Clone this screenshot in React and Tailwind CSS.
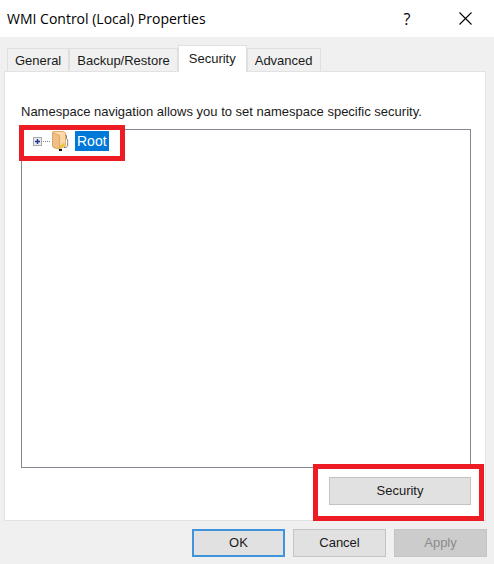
import React, { useState } from "react";

const tabs = ["General", "Backup/Restore", "Security", "Advanced"];

const FolderIcon = () => (
  <svg width="20" height="22" viewBox="0 0 20 22" aria-hidden="true">
    <path d="M3 1.5h11l1.5 1.5v13l-4 2H4l-1.5-2z" fill="#fbdcae" stroke="#dfae72" />
    <path d="M2.5 2.5l7 3v14l-5-2-2-2z" fill="#f0bf86" stroke="#d9a05c" strokeWidth="0.8" />
    <path d="M10 5.5l4.5-2.5v12l-4.5 4z" fill="#fcd7a4" />
    <path d="M10 15.5l4.5-3v3.5l-4.5 3.5z" fill="#e6c93e" />
    <path d="M15.5 5.5h1v3l1.2 1.5v6l-1.7 1.5h-2" fill="none" stroke="#77705f" strokeWidth="0.9" />
    <path d="M9 19h3v2H9z" fill="#111111" />
  </svg>
);

const ExpandIcon = () => (
  <svg width="17" height="9" viewBox="0 0 17 9" aria-hidden="true">
    <rect x="0.5" y="0.5" width="8" height="8" fill="#e8eaf4" stroke="#a8a8a8" />
    <path d="M2 4.5h5M4.5 2v5" stroke="#26358c" strokeWidth="1.4" />
    <path d="M10 4.5h7" stroke="#808080" strokeDasharray="1 1" />
  </svg>
);

const App = () => {
  const [active, setActive] = useState("Security");

  return (
    <div className="flex min-h-screen w-full flex-col bg-[#f0f0f0] font-['Liberation_Sans',Arial,sans-serif] text-[13px] text-[#1a1a1a]">
      <header className="flex h-[37px] items-center bg-white pl-[7px] pr-[18px] text-black">
        <h1 className="flex-1 font-['Open_Sans','Noto_Sans',sans-serif] text-sm leading-5">
          WMI Control (Local) Properties
        </h1>
        <button
          type="button"
          aria-label="Help"
          className="mr-10 w-4 font-['Open_Sans','Noto_Sans',sans-serif] text-base leading-5"
        >
          ?
        </button>
        <button type="button" aria-label="Close" className="px-1">
          <svg width="13" height="13" viewBox="0 0 13 13">
            <path d="M0.5 0.5l12 12M12.5 0.5l-12 12" stroke="#000" strokeWidth="1.1" />
          </svg>
        </button>
      </header>

      <main className="flex-1 pl-1 pr-2 pt-2">
        <div role="tablist" className="flex items-end pl-[3px]">
          {tabs.map((tab) => (
            <button
              key={tab}
              type="button"
              role="tab"
              aria-selected={active === tab}
              onClick={() => setActive(tab)}
              className={
                active === tab
                  ? "-mb-px h-[27px] border border-b-0 border-[#e0e0e0] bg-white px-[10px] pb-px leading-5"
                  : "h-[23px] border border-b-0 border-[#dfdfdf] px-[7px] pt-0.5 leading-5"
              }
            >
              {tab}
            </button>
          ))}
        </div>

        <section
          role="tabpanel"
          className="border border-[#e2e2e2] bg-white pl-4 pr-[14px] pt-[30px] pb-[15px]"
        >
          <p className="whitespace-nowrap leading-5">
            Namespace navigation allows you to set namespace specific security.
          </p>
          <ul role="tree" className="mt-[7px] h-[339px] border border-[#828790] pl-[11px]">
            <li role="treeitem" aria-selected="true" className="relative flex w-fit items-center">
              <ExpandIcon />
              <FolderIcon />
              <span className="ml-[5px] bg-[#0078d7] px-[2px] text-sm leading-5 text-white">
                Root
              </span>
              <span className="pointer-events-none absolute -left-[14px] -right-4 -top-[5px] -bottom-[9px] border-[5px] border-[#ed1c24]" />
            </li>
          </ul>
          <div className="mt-[9px] flex justify-end">
            <div className="relative">
              <button
                type="button"
                className="h-7 w-[142px] border border-[#c3c3c3] bg-[#e1e1e1]"
              >
                Security
              </button>
              <span className="pointer-events-none absolute -left-4 -right-[13px] -top-[13px] -bottom-4 border-[5px] border-[#ed1c24]" />
            </div>
          </div>
        </section>
      </main>

      <footer className="flex justify-end gap-2 pb-2 pr-[7px] pt-2">
        <button
          type="button"
          className="h-7 w-[93px] border-2 border-[#3f94dc] bg-[#e1e1e1]"
        >
          OK
        </button>
        <button
          type="button"
          className="h-7 w-[93px] border border-[#c3c3c3] bg-[#e1e1e1]"
        >
          Cancel
        </button>
        <button
          type="button"
          disabled
          className="h-7 w-[93px] border border-[#c4c4c4] bg-[#cccccc] text-[#8b8b8b]"
        >
          Apply
        </button>
      </footer>
    </div>
  );
};

export default App;
